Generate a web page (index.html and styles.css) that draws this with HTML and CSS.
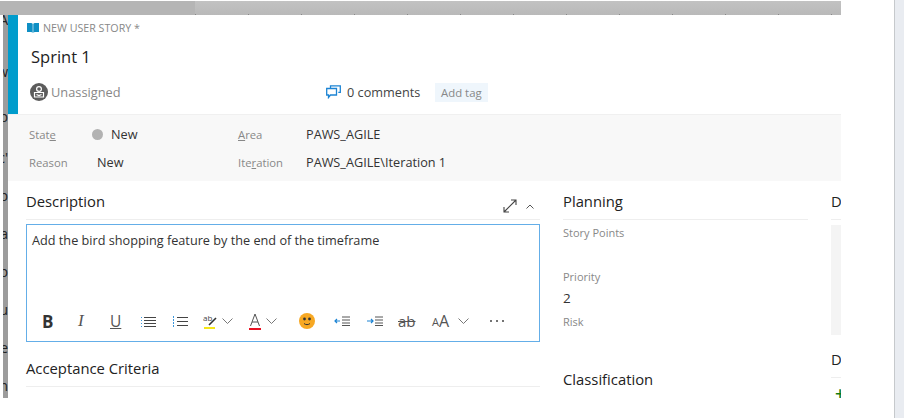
FILE: index.html
```html
<!DOCTYPE html>
<html lang="en">
<head>
    <meta charset="utf-8" />
    <title>New User Story</title>
    <link rel="stylesheet" href="styles.css">
</head>
<body>
<div class="page">
    <div class="stage">
        <div class="topbar">
            <div class="topbar-left"></div>
            <div class="topbar-right"></div>
        </div>
        <div class="stage-main">
            <div class="backdrop">
                <span>A</span><span>w</span><span>p</span><span>'c</span><span>p</span><span>a</span><span>p</span><span>u</span><span>e</span><span>n</span>
            </div>
            <div class="dialog">
                <div class="header">
                    <div class="accent"></div>
                    <div class="header-body">
                        <div class="kind">
                            <svg width="12" height="10" viewBox="0 0 12 10"><path fill="#0f8fc4" d="M0 0h3.500c1 0 2 .4 2.200 1v9C5.300 9.300 4.500 9 3.500 9H0zM12 0H8.500c-1 0-2 .4-2.200 1v9c.4-.7 1.200-1 2.200-1H12z"/></svg>
                            <span>NEW USER STORY *</span>
                        </div>
                        <div class="title">Sprint 1</div>
                        <div class="meta">
                            <div class="assignee">
                                <svg width="18" height="18" viewBox="0 0 18 18"><circle cx="9" cy="9" r="9" fill="#5c5c5c"/><circle cx="9" cy="6" r="2.400" fill="none" stroke="#fff" stroke-width="1.200"/><path fill="none" stroke="#fff" stroke-width="1.200" d="M4.500 9.500h9v4.500h-9zM6.500 11.500l2.500 1 2.500-1"/></svg>
                                <span>Unassigned</span>
                            </div>
                            <div class="comments">
                                <svg width="15" height="14" viewBox="0 0 15 14"><path fill="none" stroke="#1c84d4" stroke-width="1.300" d="M4.500 3V.8h9.800v6.500h-2M.7 3.500h9.800V10H4.500L2.500 12.500V10H.7z"/></svg>
                                <span>0 comments</span>
                            </div>
                            <div class="tag">Add tag</div>
                        </div>
                    </div>
                </div>
                <div class="fields">
                    <div class="label">Stat<u>e</u></div>
                    <div class="value state"><i class="dot"></i>New</div>
                    <div class="label"><u>A</u>rea</div>
                    <div class="value">PAWS_AGILE</div>
                    <div class="label">Reason</div>
                    <div class="value reason">New</div>
                    <div class="label">Ite<u>r</u>ation</div>
                    <div class="value">PAWS_AGILE\Iteration 1</div>
                </div>
                <div class="columns">
                    <div class="col-main">
                        <div class="section-head">
                            <span>Description</span>
                            <div class="head-icons">
                                <svg width="14" height="14" viewBox="0 0 14 14"><path fill="none" stroke="#444" stroke-width="1.100" d="M1 13L13 1M8 1h5v5M1 8v5h5"/></svg>
                                <svg width="8" height="5" viewBox="0 0 8 5"><path fill="none" stroke="#555" d="M.5 4.500L4 1l3.500 3.500"/></svg>
                            </div>
                        </div>
                        <div class="editor">
                            <div class="editor-text">Add the bird shopping feature by the end of the timeframe</div>
                            <div class="toolbar">
                                <b class="tool-bold">B</b>
                                <i class="tool-italic">I</i>
                                <u class="tool-under">U</u>
                                <svg class="t-bullets" width="15" height="11" viewBox="0 0 15 11"><path fill="none" stroke="#444" d="M3 1.500h12M3 4.500h12M3 7.500h12M3 10.500h12"/><path fill="none" stroke="#3a96dd" stroke-dasharray="1 2" d="M.5 1v10"/></svg>
                                <svg class="t-numbers" width="16" height="11" viewBox="0 0 16 11"><path fill="none" stroke="#444" d="M5 1.500h11M5 5.500h11M5 9.500h11"/><path fill="none" stroke="#3a96dd" stroke-dasharray="2 1" d="M1.500 0v11"/></svg>
                                <div class="t-highlight">
                                    <svg width="16" height="16" viewBox="0 0 16 16"><text x="0" y="8" font-size="8" font-family="Open Sans" fill="#444">ab</text><path stroke="#333" stroke-width="1.600" d="M6 12L13 5"/><path stroke="#f5e616" stroke-width="2" d="M1 15h11"/></svg>
                                    <svg class="chev" width="11" height="6" viewBox="0 0 11 6"><path fill="none" stroke="#777" d="M.5.500l5 5 5-5"/></svg>
                                </div>
                                <div class="t-color">
                                    <svg width="12" height="17" viewBox="0 0 12 17"><path fill="none" stroke="#555" d="M1.500 13L6 1l4.500 12M3 9h6"/><path stroke="#e81123" stroke-width="2" d="M0 16h12"/></svg>
                                    <svg class="chev" width="11" height="6" viewBox="0 0 11 6"><path fill="none" stroke="#777" d="M.5.500l5 5 5-5"/></svg>
                                </div>
                                <svg class="t-emoji" width="16" height="16" viewBox="0 0 16 16"><circle cx="8" cy="8" r="8" fill="#f7a823"/><circle cx="5.500" cy="6" r="1.400" fill="#333"/><circle cx="10.500" cy="6" r="1.400" fill="#333"/><path fill="none" stroke="#333" d="M5 10.500c1.500 1.500 4.500 1.500 6 0"/></svg>
                                <svg class="t-outdent" width="16" height="10" viewBox="0 0 16 10"><path fill="none" stroke="#1c84d4" stroke-width="1.200" d="M6 5H1M3 3L1 5l2 2"/><path fill="none" stroke="#555" d="M8 1h8M8 4h8M8 7h8M8 9.500h8"/></svg>
                                <svg class="t-indent" width="16" height="10" viewBox="0 0 16 10"><path fill="none" stroke="#1c84d4" stroke-width="1.200" d="M0 5h6M4 3l2 2-2 2"/><path fill="none" stroke="#555" d="M8 1h8M8 4h8M8 7h8M8 9.500h8"/></svg>
                                <span class="t-strike">ab</span>
                                <div class="t-size">
                                    <span class="small-a">A</span><span class="big-a">A</span>
                                    <svg class="chev" width="11" height="6" viewBox="0 0 11 6"><path fill="none" stroke="#777" d="M.5.500l5 5 5-5"/></svg>
                                </div>
                                <div class="t-more"><i></i><i></i><i></i></div>
                            </div>
                        </div>
                        <div class="section-head second">
                            <span>Acceptance Criteria</span>
                        </div>
                    </div>
                    <div class="col-side">
                        <div class="section-head">
                            <span>Planning</span>
                        </div>
                        <div class="plan-label">Story Points</div>
                        <div class="plan-label priority">Priority</div>
                        <div class="plan-value">2</div>
                        <div class="plan-label risk">Risk</div>
                        <div class="section-title classification">Classification</div>
                    </div>
                    <div class="col-clip">
                        <div class="section-head">
                            <span>Details</span>
                        </div>
                        <div class="clip-box"></div>
                        <div class="section-head third">
                            <span>Development</span>
                        </div>
                        <div class="clip-add">+</div>
                    </div>
                </div>
            </div>
        </div>
    </div>
    <div class="rail"></div>
</div>
</body>
</html>
```

FILE: styles.css
```css
body {
    margin: 0; background-color: #fff;
    font: 12.700px "Open Sans", "Noto Sans", sans-serif;
    color: #333;
}
svg { display: block; flex: none; }

.page { display: flex; width: 904px; height: 418px; overflow: hidden; }
.stage { width: 841px; padding-top: 1px; }
.rail {
    width: 9px; margin-left: 53px;
    background-color: #e9ecf1; border-left: 1px solid #c6c9cc;
}

.topbar { display: flex; height: 14px; border-bottom: 0; }
.topbar-left { width: 195px; background-color: #b5b5b5; }
.topbar-right {
    flex: 1;
    background:
        repeating-linear-gradient(90deg, #888 0 1px, transparent 1px 53px) left bottom / 100% 1px no-repeat,
        linear-gradient(#c2c2c2, #b9b9b9);
}

.stage-main { display: flex; height: 383px; padding-left: 3px; }
.backdrop {
    width: 5px; background-color: #9c9c9c; overflow: hidden;
    display: flex; flex-direction: column; gap: 20px;
    font-size: 14px; line-height: 18px; color: #222; direction: rtl;
}
.backdrop span { flex: none; }
.backdrop span:first-child { margin: -4px 0 14px; }
.backdrop span:nth-child(2) { margin-bottom: 7px; }
.backdrop span:nth-child(3) { margin-bottom: 3px; }
.dialog { flex: 1; height: 403px; min-width: 0; overflow: hidden; background-color: #fff; }

.header { display: flex; height: 99px; }
.accent { width: 10px; background-color: #009ccc; }
.header-body { flex: 1; padding: 6px 0 0 9px; }
.kind {
    display: flex; align-items: center; gap: 4px;
    font-size: 10.700px; line-height: 14px; color: #888;
}
.title { margin: 10px 0 0 4px; font-size: 16.500px; line-height: 24px; color: #222; }
.meta { display: flex; align-items: center; margin-top: 13px; padding-left: 3px; height: 20px; }
.assignee { display: flex; align-items: center; gap: 3px; width: 296px; font-size: 12.800px; color: #888; }
.comments { display: flex; align-items: center; gap: 6px; width: 109px; color: #444; }
.tag {
    padding: 0 6px; line-height: 19px; font-size: 11.400px;
    color: #888; background-color: #eff6fc;
}

.fields {
    display: grid; grid-template-columns: 63px 146px 68px 1fr; grid-auto-rows: 28px;
    align-items: center; height: 67px; box-sizing: border-box;
    padding: 5px 0 0 21px;
    background-color: #f8f8f8; border-top: 1px solid #f0f0f0;
}
.label { font-size: 11.300px; color: #888; }
.value { color: #333; }
.state { display: flex; align-items: center; }
.dot { width: 11px; height: 11px; margin-right: 8px; border-radius: 50%; background-color: #b2b2b2; }
.reason { padding-left: 5px; }

.columns { display: flex; gap: 23px; padding: 9px 0 0 18px; }
.col-main { width: 514px; flex: none; }
.col-side { width: 245px; flex: none; }
.col-clip { width: 100px; flex: none; }

.section-head {
    display: flex; justify-content: space-between; align-items: flex-start;
    height: 29px; border-bottom: 1px solid #eee;
    font-size: 14.800px; font-weight: 500; line-height: 22px; color: #222;
}
.head-icons { display: flex; align-items: center; gap: 9px; padding: 9px 6px 0 0; }
.second { margin-top: 14px; height: 30px; line-height: 25px; }

.editor {
    height: 116px; margin-top: 4px;
    border: 1px solid #64aee8;
    display: flex; flex-direction: column; justify-content: space-between;
}
.editor-text { padding: 6px 0 0 5px; line-height: 18px; color: #333; }
.toolbar { display: flex; align-items: center; height: 20px; margin-bottom: 10px; padding-left: 15px; }
.tool-bold { width: 36px; font-size: 17px; color: #333; }
.tool-italic { width: 32px; font: italic 17px "Liberation Serif", serif; color: #555; }
.tool-under { width: 31px; font-size: 15.500px; color: #555; }
.t-bullets { margin-right: 16px; }
.t-numbers { margin-right: 15px; }
.t-highlight, .t-color, .t-size { display: flex; align-items: center; }
.t-highlight { width: 46px; gap: 3px; }
.t-color { width: 50px; gap: 5px; }
.t-emoji { margin-right: 19px; }
.t-outdent { margin-right: 17px; }
.t-indent { margin-right: 15px; }
.t-strike { width: 31px; font-size: 15px; color: #555; text-decoration: line-through; }
.t-size { width: 58px; margin-left: 3px; color: #555; }
.small-a { font-size: 11px; }
.big-a { font-size: 16px; margin-right: 9px; }
.t-more { display: flex; gap: 4px; }
.t-more i { width: 2px; height: 2px; background-color: #444; border-radius: 50%; }

.plan-label { margin-top: 5px; font-size: 11px; line-height: 16px; color: #888; }
.priority { margin-top: 28px; }
.plan-value { margin-top: 3px; font-size: 13.500px; line-height: 20px; color: #333; }
.risk { margin-top: 6px; }
.section-title { font-size: 14.800px; font-weight: 500; color: #222; }
.classification { margin-top: 39px; line-height: 20px; }

.clip-box { height: 110px; margin-top: 5px; background-color: #f4f4f4; }
.third { margin-top: 13px; }
.clip-add { padding: 2px 0 0 4px; font-size: 18px; line-height: 26px; font-weight: 600; color: #107c10; }
```
